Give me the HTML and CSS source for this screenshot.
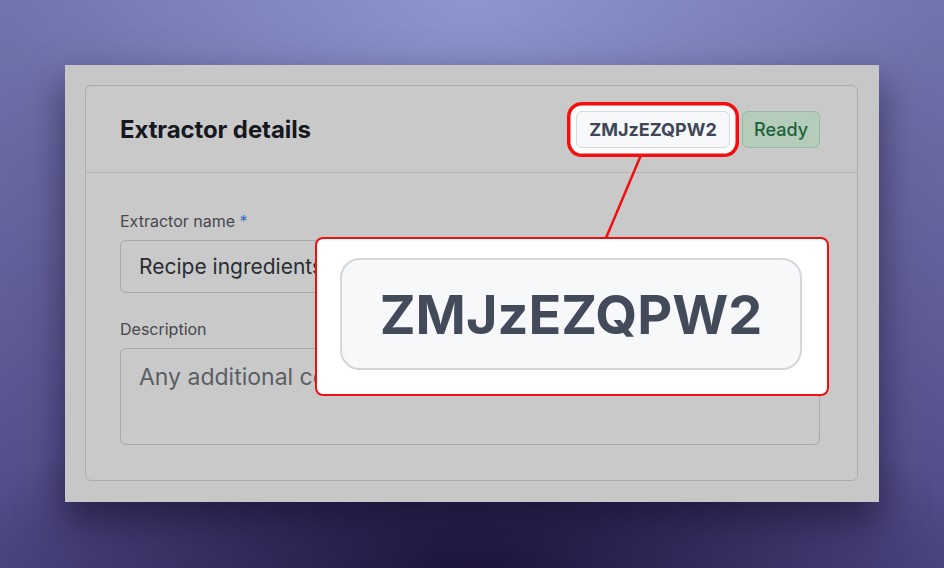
FILE: index.html
```html
<!DOCTYPE html>
<html>
<head>
    <meta charset="UTF-8">
    <meta name="viewport" content="width=device-width, initial-scale=1.0">
    <title>Extractor details</title>
    <link rel="stylesheet" href="styles.css">
</head>
<body>
    <div class="stage">
        <div class="frame">
            <div class="card">
                <div class="card-header">
                    <h2 class="card-title">Extractor details</h2>
                    <div class="badges">
                        <span class="badge badge-id">ZMJzEZQPW2</span>
                        <span class="badge badge-ready">Ready</span>
                    </div>
                </div>

                <div class="card-body">
                    <div class="field">
                        <label class="field-label">Extractor name <span class="required">*</span></label>
                        <div class="input">Recipe ingredients</div>
                    </div>
                    <div class="field">
                        <label class="field-label">Description</label>
                        <div class="textarea">Any additional context</div>
                    </div>
                </div>
            </div>
        </div>

        <svg class="pointer" width="944" height="568" viewBox="0 0 944 568">
            <line x1="641" y1="155" x2="606" y2="238" stroke="#f01010" stroke-width="2.5"/>
        </svg>

        <div class="callout">
            <span class="badge-big">ZMJzEZQPW2</span>
        </div>
    </div>
</body>
</html>
```

FILE: styles.css
```css
* {
    margin: 0;
    padding: 0;
    box-sizing: border-box;
}

html, body {
    height: 100%;
    overflow: hidden;
}

body {
    font-family: Inter, "Noto Sans", sans-serif;
    background:
        radial-gradient(ellipse 520px 190px at 50% 100%, rgba(24, 14, 52, 0.9), rgba(24, 14, 52, 0) 100%),
        radial-gradient(ellipse 460px 260px at 50% 0%, #8d96cd, rgba(141, 150, 205, 0) 100%),
        linear-gradient(180deg, #7275ad 0%, #5f5c96 55%, #4d4884 100%);
}

.stage {
    position: relative;
    width: 100%;
    height: 100vh;
    display: flex;
    justify-content: center;
    align-items: center;
}

.frame {
    width: 814px;
    height: 437px;
    margin-top: -1px;
    padding: 20px 21px 21px 20px;
    background-color: #c7c7c7;
    box-shadow: 0 18px 36px rgba(12, 6, 32, 0.55);
}

.card {
    height: 100%;
    background-color: #c9c9c9;
    border: 1px solid #acacac;
    border-radius: 6px;
}

.card-header {
    height: 87px;
    display: flex;
    align-items: center;
    justify-content: space-between;
    padding: 0 37px 0 34px;
    border-bottom: 1px solid #b3b3b3;
}

.card-title {
    color: #15181e;
    font-size: 24px;
    font-weight: 700;
    letter-spacing: -0.1px;
    margin-top: 1px;
}

.badges {
    display: flex;
    gap: 12px;
}

.badge {
    height: 37px;
    display: inline-flex;
    align-items: center;
    font-size: 18px;
    border-radius: 6px;
}

.badge-id {
    width: 154px;
    justify-content: center;
    background-color: #f6f8fa;
    border: 1px solid #d6d9de;
    color: #3f4656;
    font-weight: 700;
    position: relative;
    z-index: 2;
    box-shadow: 0 0 0 5.5px #ffffff, 0 0 0 9px #f01010;
}

.badge-ready {
    padding: 0 11px;
    background-color: #b5ccbb;
    border: 1px solid #93bb9f;
    color: #1d6236;
    font-weight: 500;
}

.card-body {
    padding: 36px 37px 0 34px;
    display: flex;
    flex-direction: column;
    gap: 24px;
}

.field {
    display: flex;
    flex-direction: column;
    gap: 7px;
}

.field-label {
    color: #45484e;
    font-size: 16px;
    line-height: 24px;
}

.required {
    color: #2f6fc4;
}

.input,
.textarea {
    border: 1px solid #a9a9a9;
    border-radius: 6px;
    padding: 0 18px;
    white-space: nowrap;
    overflow: hidden;
}

.input {
    height: 53px;
    display: flex;
    align-items: center;
    color: #2a2d33;
    font-size: 21px;
}

.textarea {
    height: 97px;
    padding-top: 14px;
    color: #5a5e65;
    font-size: 23px;
}

.pointer {
    position: absolute;
    top: 0;
    left: 0;
    z-index: 3;
}

.callout {
    position: absolute;
    left: 315px;
    top: 237px;
    width: 514px;
    height: 159px;
    z-index: 4;
    background-color: #ffffff;
    border: 2.5px solid #f01010;
    border-radius: 8px;
    display: flex;
    padding: 19px 0 0 23px;
}

.badge-big {
    width: 462px;
    height: 112px;
    display: flex;
    align-items: center;
    justify-content: center;
    background-color: #f7f8fa;
    border: 2.5px solid #d3d6da;
    border-radius: 20px;
    color: #434a59;
    font-size: 54px;
    font-weight: 700;
}
```
